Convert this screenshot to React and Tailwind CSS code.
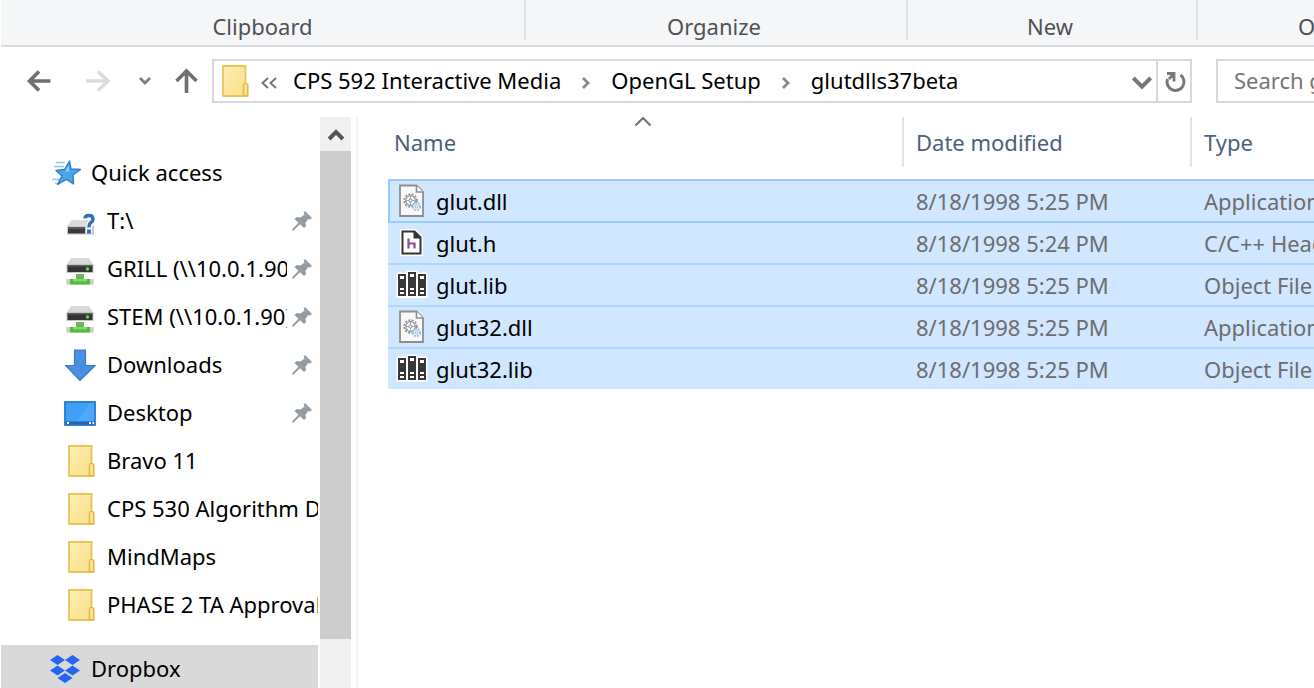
import React from "react";

const FONT = "font-['Noto_Sans','Open_Sans',sans-serif]";

function FolderIcon() {
  return (
    <svg width="28" height="34" viewBox="0 0 28 34" className="shrink-0" aria-hidden="true">
      <defs>
        <linearGradient id="folderFill" x1="0" y1="0" x2="1" y2="1">
          <stop offset="0" stopColor="#fdeeb3" />
          <stop offset="1" stopColor="#f9df86" />
        </linearGradient>
      </defs>
      <path d="M2 2H24.500V19L26.500 21V32H2Z" fill="url(#folderFill)" stroke="#e8c65c" strokeWidth="1.800" />
      <path d="M22.500 31.500V21.500Q22.500 19.500 24.500 19.500Q26.600 19.500 26.600 21.500V31.500Z" fill="#fbe698" stroke="#e2bd4e" strokeWidth="1.600" />
    </svg>
  );
}

function StarIcon() {
  return (
    <svg width="30" height="28" viewBox="0 0 30 28" className="shrink-0" aria-hidden="true">
      <path d="M5 3.500H14M3 7.500H13M1 20.500H10M4 24.500H9" stroke="#8fc6ee" strokeWidth="1.600" />
      <path d="M18.500 2L20 10L29.500 10.500L22 16L22.500 25L15.500 20.500L6.500 25.500L11 17L5 11.500L13.500 10.500Z" fill="#4aa5ea" stroke="#2f7fc8" strokeWidth="1.400" strokeLinejoin="round" />
      <path d="M17.500 6L18.500 12L14 13Z" fill="#8accf7" />
    </svg>
  );
}

function UnknownDriveIcon() {
  return (
    <svg width="32" height="32" viewBox="0 0 32 32" className="shrink-0" aria-hidden="true">
      <path d="M7 15H24L29 21H2Z" fill="#dcdcdc" />
      <path d="M2 21H29V29.500H2Z" fill="#c9c9c9" />
      <path d="M3 22H20V28.500H3Z" fill="#3a3a3a" />
      <path d="M3 22H20V24H3Z" fill="#5b5b5b" />
      <path d="M19.500 13Q19.500 10 24 10Q28 10 28 13.500Q28 16 25.500 17.500Q24 18.500 24 28" fill="none" stroke="#fff" strokeWidth="6" />
      <path d="M20 13.500Q20 10.500 24 10.500Q28 10.500 28 14Q28 16.200 25.800 17.700Q24 18.900 24 22.500" fill="none" stroke="#2f70c0" strokeWidth="3.400" />
      <rect x="22" y="24.500" width="4" height="4" fill="#2f70c0" />
    </svg>
  );
}

function NetworkDriveIcon() {
  return (
    <svg width="32" height="32" viewBox="0 0 32 32" className="shrink-0" aria-hidden="true">
      <path d="M6 5H24L28 11H2Z" fill="#d9d9d9" />
      <path d="M1.500 11H28.500V20H1.500Z" fill="#c4c4c4" />
      <path d="M2.500 12H27.500V19H2.500Z" fill="#343434" />
      <path d="M2.500 12H27.500V13.500H2.500Z" fill="#5d5d5d" />
      <circle cx="22.500" cy="16" r="1.700" fill="#4be05a" />
      <path d="M11 21H19V27H11Z" fill="#5fbf4e" />
      <path d="M1.500 26H28.500V31.500H1.500Z" fill="#c9c9c9" />
      <path d="M5 26H25V31.500H5Z" fill="#57b847" />
      <path d="M8 26H22V28.500H8Z" fill="#84d376" />
    </svg>
  );
}

function DownloadsIcon() {
  return (
    <svg width="32" height="32" viewBox="0 0 32 32" className="shrink-0" aria-hidden="true">
      <path d="M9.500 1H20.500V16.500H30L15 31.500L0.500 16.500H9.500Z" fill="#4a90e2" stroke="#3a78c4" strokeWidth="1.200" />
    </svg>
  );
}

function DesktopIcon() {
  return (
    <svg width="34" height="32" viewBox="0 0 34 32" className="shrink-0" aria-hidden="true">
      <rect x="1" y="5" width="30" height="23" fill="#40a0f8" stroke="#2878c8" strokeWidth="1.800" />
      <path d="M13 24L26 6H30V24Z" fill="#4fa8fa" />
      <rect x="2" y="24.500" width="28" height="3" fill="#1f66b0" />
      <path d="M3 26H5M25 26H27M28.500 26H30" stroke="#fff" strokeWidth="1.800" />
    </svg>
  );
}

function DropboxIcon() {
  return (
    <svg width="32" height="30" viewBox="0 0 32 30" className="shrink-0" aria-hidden="true">
      <path
        d="M8.500 1L16 6L8.500 11L1 6ZM23.500 1L31 6L23.500 11L16 6ZM8.500 11.500L16 16.500L8.500 21.500L1 16.500ZM23.500 11.500L31 16.500L23.500 21.500L16 16.500ZM16 19L23.500 24L16 29L8.500 24Z"
        fill="#2565f5"
      />
    </svg>
  );
}

function PinIcon() {
  return (
    <svg width="22" height="22" viewBox="0 0 22 22" className="shrink-0" aria-hidden="true">
      <path d="M14 1L21 8L19 9.500L17.500 9L14.500 12.500L15 16L13 18L9 14.200L2.500 20.500L1 21L1.500 19L7.500 12.800L3.500 9L5.500 7L9.500 7.500L13.500 4.500L12.700 2.500Z" fill="#949ca3" />
    </svg>
  );
}

function DllIcon() {
  return (
    <svg width="28" height="34" viewBox="0 0 28 34" aria-hidden="true">
      <path d="M2 1.500H18.500L25 8V32H2Z" fill="#f8f8f8" stroke="#8d8d8d" strokeWidth="1.800" />
      <path d="M18.500 1.500V8H25" fill="#fff" stroke="#8d8d8d" strokeWidth="1.600" />
      <circle cx="12.500" cy="16.500" r="6.400" fill="none" stroke="#8a9096" strokeWidth="1.600" strokeDasharray="2 1.400" />
      <circle cx="12.500" cy="16.500" r="4.800" fill="#fbfbfb" stroke="#8a9096" strokeWidth="1.200" />
      <path d="M12.500 12V21M8 16.500H17" stroke="#a3a9ae" strokeWidth="1" />
      <circle cx="12.500" cy="16.500" r="1.600" fill="#fff" stroke="#7c838a" />
      <circle cx="18.500" cy="22.500" r="3.600" fill="#eaf5fd" stroke="#9cc4e2" strokeWidth="2" strokeDasharray="2 1" />
      <circle cx="18.500" cy="22.500" r="1.300" fill="#fff" stroke="#8fb9d9" />
    </svg>
  );
}

function HeaderIcon() {
  return (
    <svg width="28" height="34" viewBox="0 0 28 34" aria-hidden="true">
      <path d="M2 3H17L25 10V30H2Z" fill="#fff" />
      <path d="M4.500 5.500H16.500L22.500 11.500V27.500H4.500Z" fill="#fff" stroke="#333" strokeWidth="2" />
      <path d="M15.500 5V12.500H23Z" fill="#333" />
      <path d="M10.500 12.500V22.500M10.500 17.500H16.500V22.500" fill="none" stroke="#8c4a9c" strokeWidth="2.200" />
    </svg>
  );
}

function LibIcon() {
  const binders = [
    { x: 2, y: 6 },
    { x: 12, y: 4 },
    { x: 22, y: 6 },
  ];
  return (
    <svg width="32" height="34" viewBox="0 0 32 34" aria-hidden="true">
      <path d="M0.500 4.500H10.500V2.500H21.500V4.500H31.500V30H0.500Z" fill="#fff" />
      {binders.map(({ x, y }) => (
        <g key={x}>
          <rect x={x} y={y} width="8" height={28 - y} fill="#383838" />
          <rect x={x + 2} y={y + 2} width="4" height="3" fill="#fff" />
          <rect x={x + 2} y="20" width="4" height="2" fill="#fff" />
          <rect x={x + 2} y="24" width="4" height="2" fill="#fff" />
        </g>
      ))}
    </svg>
  );
}

function Chevron({ className, d, size = "16", width = "2", color = "#777" }) {
  return (
    <svg width={size} height={size} viewBox="0 0 16 16" className={className} aria-hidden="true">
      <path d={d} fill="none" stroke={color} strokeWidth={width} />
    </svg>
  );
}

function NavArrow({ color, d }) {
  return (
    <svg width="28" height="28" viewBox="0 0 28 28" aria-hidden="true">
      <path d={d} fill="none" stroke={color} strokeWidth="3.600" />
    </svg>
  );
}

const LEFT = "M26.500 14H5M15 4.500L5.500 14L15 23.500";
const RIGHT = "M2 14H24M14 4.500L24 14L14 23.500";
const UP = "M13.500 26V4M3.500 14L13.500 4L23.500 14";

const quickItems = [
  { label: "T:\\", Icon: UnknownDriveIcon, pinned: true },
  { label: "GRILL (\\\\10.0.1.90)", Icon: NetworkDriveIcon, pinned: true },
  { label: "STEM (\\\\10.0.1.90)", Icon: NetworkDriveIcon, pinned: true },
  { label: "Downloads", Icon: DownloadsIcon, pinned: true },
  { label: "Desktop", Icon: DesktopIcon, pinned: true },
  { label: "Bravo 11", Icon: FolderIcon },
  { label: "CPS 530 Algorithm Design", Icon: FolderIcon },
  { label: "MindMaps", Icon: FolderIcon },
  { label: "PHASE 2 TA Approval", Icon: FolderIcon },
];

const files = [
  { name: "glut.dll", date: "8/18/1998 5:25 PM", type: "Application extension", Icon: DllIcon },
  { name: "glut.h", date: "8/18/1998 5:24 PM", type: "C/C++ Header", Icon: HeaderIcon },
  { name: "glut.lib", date: "8/18/1998 5:25 PM", type: "Object File Library", Icon: LibIcon },
  { name: "glut32.dll", date: "8/18/1998 5:25 PM", type: "Application extension", Icon: DllIcon },
  { name: "glut32.lib", date: "8/18/1998 5:25 PM", type: "Object File Library", Icon: LibIcon },
];

function Ribbon() {
  return (
    <div className="ml-px flex h-[47px] shrink-0 border-b-2 border-[#dadcde] bg-[#f5f6f7] text-[22px] leading-7 text-[#505055]">
      <div className="flex h-10 w-[525px] shrink-0 items-end justify-center border-r-2 border-[#e2e3e4]">Clipboard</div>
      <div className="flex h-10 w-[382px] shrink-0 items-end justify-center border-r-2 border-[#e2e3e4] pr-1">Organize</div>
      <div className="flex h-10 w-[290px] shrink-0 items-end justify-center border-r-2 border-[#e2e3e4] pr-1">New</div>
      <div className="flex h-10 min-w-0 flex-1 items-end overflow-hidden pl-[100px]">Open</div>
    </div>
  );
}

function AddressBar() {
  return (
    <div className="flex h-14 shrink-0 items-end text-[22px] text-black">
      <nav className="flex h-11 w-[212px] shrink-0 items-center pl-6" aria-label="History">
        <button type="button" aria-label="Back" className="w-[60px]"><NavArrow color="#707070" d={LEFT} /></button>
        <button type="button" aria-label="Forward" className="w-[53px]"><NavArrow color="#dcdcdc" d={RIGHT} /></button>
        <button type="button" aria-label="Recent locations" className="w-9"><Chevron d="M3 5L8 10L13 5" width="2.800" color="#808080" /></button>
        <button type="button" aria-label="Up"><NavArrow color="#707070" d={UP} /></button>
      </nav>
      <div className="flex h-11 min-w-0 flex-1 items-stretch border-2 border-[#d9d9d9]">
        <div className="flex min-w-0 flex-1 items-center overflow-hidden whitespace-nowrap pl-[7px]">
          <FolderIcon />
          <svg width="18" height="14" viewBox="0 0 18 14" className="ml-[11px] mt-1 shrink-0" aria-hidden="true">
            <path d="M8 2L2.500 7L8 12M16 2L10.500 7L16 12" fill="none" stroke="#777" strokeWidth="2" />
          </svg>
          <a href="#media" className="ml-[15px] pb-0.5">CPS 592 Interactive Media</a>
          <Chevron className="mx-[17px] mt-1 shrink-0" d="M5 3L10 8L5 13" width="2.800" color="#8a8a8a" />
          <a href="#setup" className="pb-0.5">OpenGL Setup</a>
          <Chevron className="mx-[17px] mt-1 shrink-0" d="M5 3L10 8L5 13" width="2.800" color="#8a8a8a" />
          <a href="#beta" className="pb-0.5">glutdlls37beta</a>
        </div>
        <button type="button" aria-label="Previous locations" className="flex w-7 items-center justify-center">
          <Chevron d="M1 5.500L8 12.500L15 5.500" size="20" width="3.200" />
        </button>
        <button type="button" aria-label="Refresh" className="flex w-[34px] items-center justify-center border-l-2 border-[#d9d9d9] pl-0.5 pt-0.5">
          <svg width="24" height="24" viewBox="0 0 24 24" aria-hidden="true">
            <path d="M17.500 5A8.500 8.500 0 1 1 4.500 9" fill="none" stroke="#777" strokeWidth="3" />
            <path d="M4 3.500H11V11.500M10.500 4L6 9" fill="none" stroke="#777" strokeWidth="2.800" />
          </svg>
        </button>
      </div>
      <input
        type="text"
        aria-label="Search"
        placeholder="Search glutdlls37beta"
        className="ml-6 h-11 w-[98px] shrink-0 rounded-none border-2 border-r-0 border-[#d9d9d9] bg-white pb-0.5 pl-4 outline-none placeholder:text-[#767676]"
      />
    </div>
  );
}

function Sidebar() {
  return (
    <aside className="flex w-[358px] shrink-0 border-r-2 border-[#f3f3f3]">
      <div className="min-w-0 flex-1 overflow-hidden pl-px pt-8">
        <a href="#quick" className="flex h-12 items-center pl-[50px]">
          <StarIcon />
          <span className="ml-2.5 pb-0.5">Quick access</span>
        </a>
        {quickItems.map(({ label, Icon, pinned }) => (
          <a key={label} href="#item" className="flex h-12 items-center pl-[63px] pr-0.5">
            <span className="flex w-[34px] shrink-0 justify-center"><Icon /></span>
            <span className="ml-[9px] min-w-0 flex-1 overflow-hidden whitespace-nowrap pb-0.5">{label}</span>
            {pinned && <span className="ml-1 mr-[5px]"><PinIcon /></span>}
          </a>
        ))}
        <a href="#dropbox" className="mt-4 mr-0.5 flex h-12 items-center bg-[#d9d9d9] pl-12">
          <DropboxIcon />
          <span className="ml-2.5 pb-0.5">Dropbox</span>
        </a>
      </div>
      <div className="mr-[5px] flex w-[31px] shrink-0 flex-col bg-[#f0f0f0]">
        <button type="button" aria-label="Scroll up" className="flex h-[34px] shrink-0 items-center justify-center">
          <Chevron d="M2.500 12L8 6.500L13.500 12" size="20" width="3.200" color="#555" />
        </button>
        <div className="h-[488px] bg-[#cdcdcd]" />
      </div>
    </aside>
  );
}

function FileList() {
  return (
    <main className="min-w-0 flex-1 overflow-hidden pl-[30px]">
      <table className="w-full table-fixed border-separate border-spacing-0 text-left">
        <colgroup>
          <col />
          <col className="w-[288px]" />
          <col className="w-[122px]" />
        </colgroup>
        <thead>
          <tr className="h-[62px] align-top text-[#4c607a]">
            <th scope="col" aria-sort="ascending" className="p-0 font-normal">
              <div className="relative h-[50px] border-r-2 border-[#e5e5e5] pl-1.5 pt-[9px] leading-8">
                Name
                <Chevron className="absolute -top-1 left-1/2 -ml-3" d="M2 10L8 4L14 10" size="20" width="1.800" />
              </div>
            </th>
            <th scope="col" className="p-0 font-normal">
              <div className="h-[50px] border-r-2 border-[#e5e5e5] pl-3 pt-[9px] leading-8">Date modified</div>
            </th>
            <th scope="col" className="p-0 font-normal">
              <div className="h-[50px] pl-3 pt-[9px] leading-8">Type</div>
            </th>
          </tr>
        </thead>
        <tbody>
          {files.map(({ name, date, type, Icon }, index) => {
            const line =
              index === 0 ? "border-t-2 border-[#99cbfb]" : index === 1 ? "border-t-2 border-[#99cbfb]" : "border-t-2 border-[#b0d6fc]";
            return (
              <tr key={name} className="h-[42px] bg-[#d1e6ff] text-[#6d6d6d]">
                <td className={`p-0 ${line}`}>
                  <div className={`flex h-10 items-center text-black ${index === 0 ? "border-l-2 border-[#99cbfb] pl-1.5" : "pl-2"}`}>
                    <span className="flex w-8 shrink-0 justify-center"><Icon /></span>
                    <span className="ml-2">{name}</span>
                  </div>
                </td>
                <td className={`overflow-hidden whitespace-nowrap p-0 pl-3 ${line}`}>{date}</td>
                <td className={`overflow-hidden whitespace-nowrap p-0 pl-3 ${line}`}>{type}</td>
              </tr>
            );
          })}
        </tbody>
      </table>
    </main>
  );
}

export default function App() {
  return (
    <div className={`flex h-screen flex-col overflow-hidden bg-white text-[22px] leading-8 text-black ${FONT}`}>
      <Ribbon />
      <AddressBar />
      <div className="mt-3.5 flex min-h-0 flex-1">
        <Sidebar />
        <FileList />
      </div>
    </div>
  );
}
